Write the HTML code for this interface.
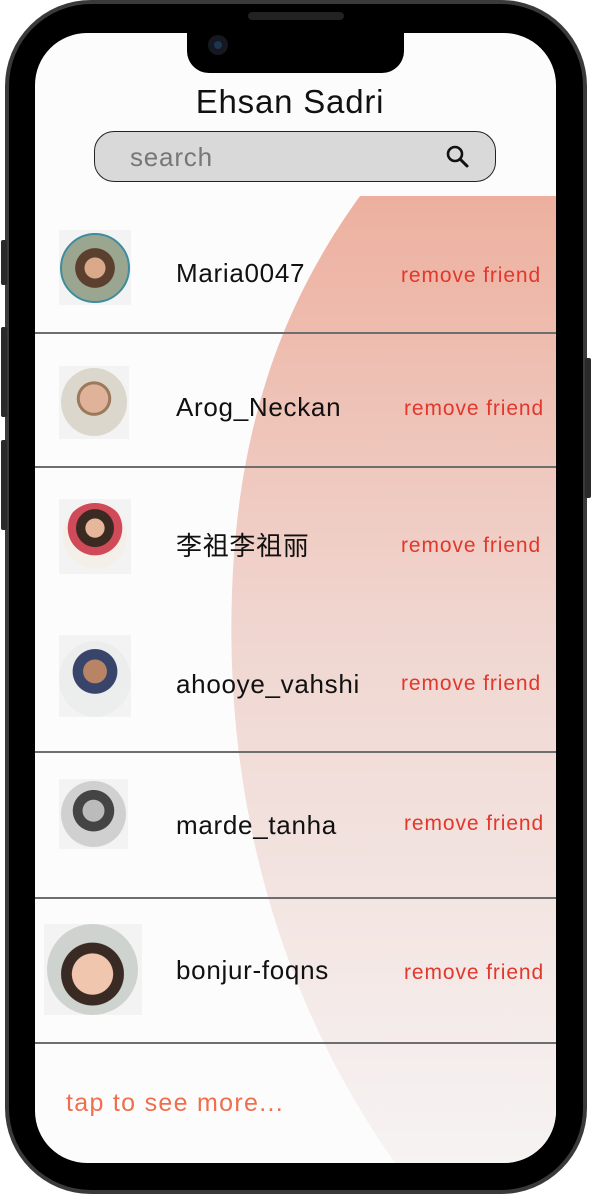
<!DOCTYPE html>
<html><head><meta charset="utf-8"><style>
*{margin:0;padding:0;box-sizing:border-box}
body{width:592px;height:1194px;background:#fff;position:relative;overflow:hidden;font-family:"Liberation Sans","Noto Sans CJK SC",sans-serif}
.a{position:absolute}
.name{position:absolute;left:176px;font-size:26px;color:#111;line-height:30px;letter-spacing:0.7px}
.rm{position:absolute;font-size:21px;color:#e3372c;line-height:26px;letter-spacing:0.9px}
.line{position:absolute;left:35px;width:521px;height:1.5px;background:#6e6e6e}
.av{position:absolute;background:#f3f3f3}
.av div{position:absolute;border-radius:50%}
</style></head><body>
<div class="a" style="left:5px;top:0;width:582px;height:1194px;border-radius:86px;background:#3a3a3c"></div>
<div class="a" style="left:9px;top:4px;width:574px;height:1186px;border-radius:82px;background:#000"></div>
<div class="a" style="left:1px;top:240px;width:6px;height:45px;background:#2a2a2a;border-radius:2px"></div>
<div class="a" style="left:1px;top:327px;width:6px;height:90px;background:#2a2a2a;border-radius:2px"></div>
<div class="a" style="left:1px;top:440px;width:6px;height:90px;background:#2a2a2a;border-radius:2px"></div>
<div class="a" style="left:585px;top:358px;width:6px;height:140px;background:#2a2a2a;border-radius:2px"></div>
<div class="a" style="left:35px;top:33px;width:521px;height:1130px;border-radius:52px;background:#fcfcfc;overflow:hidden">
<svg class="a" style="left:0;top:0" width="521" height="1130">
<defs><linearGradient id="g" x1="0" y1="0" x2="0" y2="1"><stop offset="0" stop-color="#edb09f"/><stop offset="0.45" stop-color="#f0d6d0"/><stop offset="1" stop-color="#f6f3f3"/></linearGradient></defs>
<path d="M325 163 L521 163 L521 1130 L360 1130 C240 960 190 760 197 560 C203 380 255 260 325 163 Z" fill="url(#g)"/>
</svg>
</div>
<div class="a" style="left:187px;top:30px;width:217px;height:43px;background:#000;border-radius:0 0 22px 22px"></div>
<div class="a" style="left:248px;top:12px;width:96px;height:8px;background:#222;border-radius:4px"></div>
<div class="a" style="left:208px;top:35px;width:20px;height:20px;border-radius:50%;background:#15181f"></div>
<div class="a" style="left:214px;top:41px;width:8px;height:8px;border-radius:50%;background:#1c3550"></div>

<div class="a" style="left:0;width:580px;top:83px;text-align:center;font-size:33px;line-height:38px;color:#111;letter-spacing:0.8px">Ehsan Sadri</div>
<div class="a" style="left:94px;top:131px;width:402px;height:51px;border:1.5px solid #222;border-radius:20px;background:#d9d9d9"></div>
<div class="a" style="left:130px;top:142px;font-size:26px;line-height:30px;color:#777;letter-spacing:0.8px">search</div>
<svg class="a" style="left:445px;top:144px" width="26" height="26"><circle cx="10" cy="10" r="7" fill="none" stroke="#111" stroke-width="2.6"/><path d="M15 15 L22 22" stroke="#111" stroke-width="3" stroke-linecap="round"/></svg>

<div class="av" style="left:59px;top:230px;width:72px;height:75px"><div style="left:1px;top:3px;width:70px;height:70px;background:radial-gradient(circle at 50% 50%,#d9a98a 0 22%,#5b4030 23% 42%,#9aa690 43% 90%);border:2.5px solid #3d8d9c"></div></div>
<div class="name" style="top:258px">Maria0047</div>
<div class="rm" style="left:401px;top:263px">remove friend</div>
<div class="line" style="top:332px"></div>

<div class="av" style="left:59px;top:366px;width:70px;height:73px"><div style="left:2px;top:2px;width:66px;height:68px;background:radial-gradient(circle at 50% 45%,#e0b29a 0 28%,#9a7a5a 29% 34%,#dcd7cc 35% 100%)"></div></div>
<div class="name" style="top:392px">Arog_Neckan</div>
<div class="rm" style="left:404px;top:396px">remove friend</div>
<div class="line" style="top:466px"></div>

<div class="av" style="left:59px;top:499px;width:72px;height:75px"><div style="left:4px;top:4px;width:64px;height:66px;background:radial-gradient(circle at 50% 38%,#e6b79b 0 18%,#3b2a22 19% 36%,#d04a5a 37% 52%,#f4efe8 53%)"></div></div>
<div class="name" style="top:531px">李祖李祖丽</div>
<div class="rm" style="left:401px;top:533px">remove friend</div>

<div class="av" style="left:59px;top:635px;width:72px;height:82px"><div style="left:0;top:6px;width:72px;height:76px;background:radial-gradient(circle at 50% 40%,#b98466 0 20%,#39446a 21% 38%,#eceeee 39%)"></div></div>
<div class="name" style="top:669px">ahooye_vahshi</div>
<div class="rm" style="left:401px;top:671px">remove friend</div>
<div class="line" style="top:751px"></div>

<div class="av" style="left:59px;top:779px;width:69px;height:70px"><div style="left:2px;top:2px;width:65px;height:66px;background:radial-gradient(circle at 50% 45%,#bbb 0 22%,#444 23% 42%,#d0d0d0 43%)"></div></div>
<div class="name" style="top:810px">marde_tanha</div>
<div class="rm" style="left:404px;top:811px">remove friend</div>
<div class="line" style="top:897px"></div>

<div class="av" style="left:44px;top:924px;width:98px;height:91px"><div style="left:3px;top:0;width:91px;height:91px;background:radial-gradient(circle at 50% 55%,#f0c6ae 0 30%,#3a2a24 31% 46%,#cfd3cf 47%)"></div></div>
<div class="name" style="top:955px">bonjur-foqns</div>
<div class="rm" style="left:404px;top:960px">remove friend</div>
<div class="line" style="top:1042px"></div>

<div class="a" style="left:66px;top:1088px;font-size:25px;line-height:30px;color:#ef6e4e;letter-spacing:1.3px">tap to see more...</div>
</body></html>
